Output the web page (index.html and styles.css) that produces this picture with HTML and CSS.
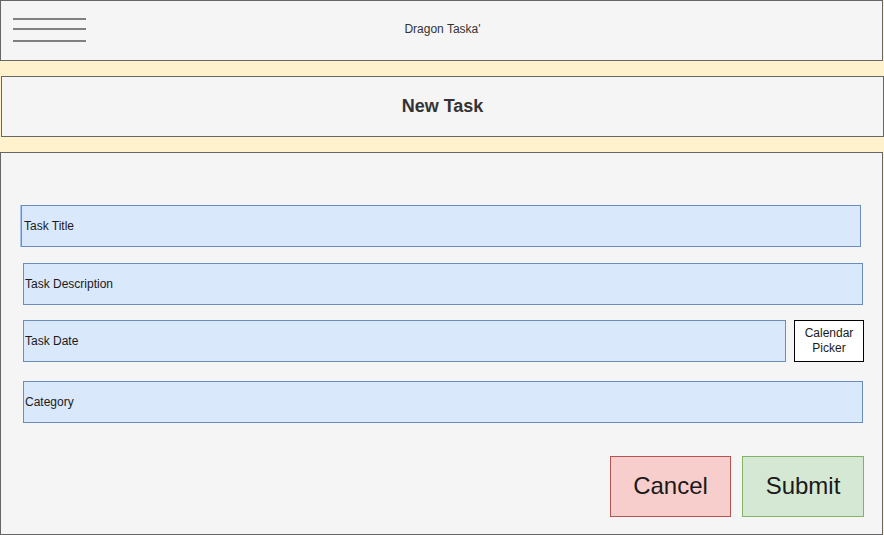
FILE: index.html
```html
<!DOCTYPE html>
<html>
<head>
<meta charset="utf-8">
<link rel="stylesheet" href="styles.css">
</head>
<body>
<div class="page">
  <header class="topbar">
    <div class="burger"><span></span><span></span><span></span></div>
    <div class="app-title">Dragon Taska'</div>
  </header>
  <div class="titlebar">New Task</div>
  <main class="form">
    <div class="field field-title">Task Title</div>
    <div class="field field-desc">Task Description</div>
    <div class="date-row">
      <div class="field field-date">Task Date</div>
      <div class="picker">Calendar<br>Picker</div>
    </div>
    <div class="field field-cat">Category</div>
    <div class="actions">
      <div class="btn btn-cancel">Cancel</div>
      <div class="btn btn-submit">Submit</div>
    </div>
  </main>
</div>
</body>
</html>
```
FILE: styles.css
```css
* { box-sizing: border-box; }
html, body { margin: 0; padding: 0; }
body {
  background: #fff2cc;
  font-family: "Liberation Sans", Arial, sans-serif;
  width: 884px;
  height: 535px;
  overflow: hidden;
}
.page { display: flex; flex-direction: column; }
.topbar {
  width: 883px;
  height: 61px;
  border: 1px solid #666666;
  background: #f5f5f5;
  position: relative;
  display: flex;
  align-items: center;
  justify-content: center;
}
.burger {
  position: absolute;
  left: 12px;
  top: 17px;
  width: 73px;
  display: flex;
  flex-direction: column;
}
.burger span { display: block; height: 2px; background: #808080; }
.burger span:nth-child(2) { margin-top: 8px; }
.burger span:nth-child(3) { margin-top: 10px; }
.app-title {
  font-size: 12px;
  color: #333333;
  margin-left: 2px;
  margin-top: -3px;
}
.titlebar {
  margin-top: 15px;
  margin-left: 1px;
  width: 883px;
  height: 61px;
  border: 1px solid #666666;
  background: #f5f5f5;
  display: flex;
  align-items: center;
  justify-content: center;
  font-size: 18px;
  font-weight: bold;
  color: #333333;
}
.form {
  margin-top: 15px;
  width: 883px;
  height: 383px;
  border: 1px solid #666666;
  background: #f5f5f5;
  display: flex;
  flex-direction: column;
  padding-top: 52px;
}
.field {
  height: 42px;
  border: 1px solid #6c8ebf;
  background: #dae8fc;
  display: flex;
  align-items: center;
  padding-left: 1px;
  font-size: 12px;
  color: #1a1a1a;
}
.field-title { margin-left: 20px; width: 840px; padding-left: 2px; box-shadow: -1px 0 0 #a9c4eb; }
.field-desc { margin-left: 22px; margin-top: 16px; width: 840px; }
.date-row {
  display: flex;
  margin-left: 22px;
  margin-top: 15px;
  gap: 8px;
}
.field-date { width: 763px; }
.picker {
  width: 70px;
  height: 42px;
  border: 1px solid #000000;
  background: #ffffff;
  display: flex;
  align-items: center;
  justify-content: center;
  text-align: center;
  font-size: 12px;
  line-height: 15px;
  color: #1a1a1a;
}
.field-cat { margin-left: 22px; margin-top: 19px; width: 840px; padding-bottom: 1px; }
.actions {
  display: flex;
  margin-top: 33px;
  margin-left: 609px;
  gap: 11px;
}
.btn {
  width: 121px;
  height: 61px;
  display: flex;
  align-items: center;
  justify-content: center;
  font-size: 24px;
  color: #1a1a1a;
  padding-bottom: 2px;
}
.btn-cancel { background: #f8cecc; border: 1px solid #b85450; }
.btn-submit { background: #d5e8d4; border: 1px solid #82b366; width: 122px; }
```
